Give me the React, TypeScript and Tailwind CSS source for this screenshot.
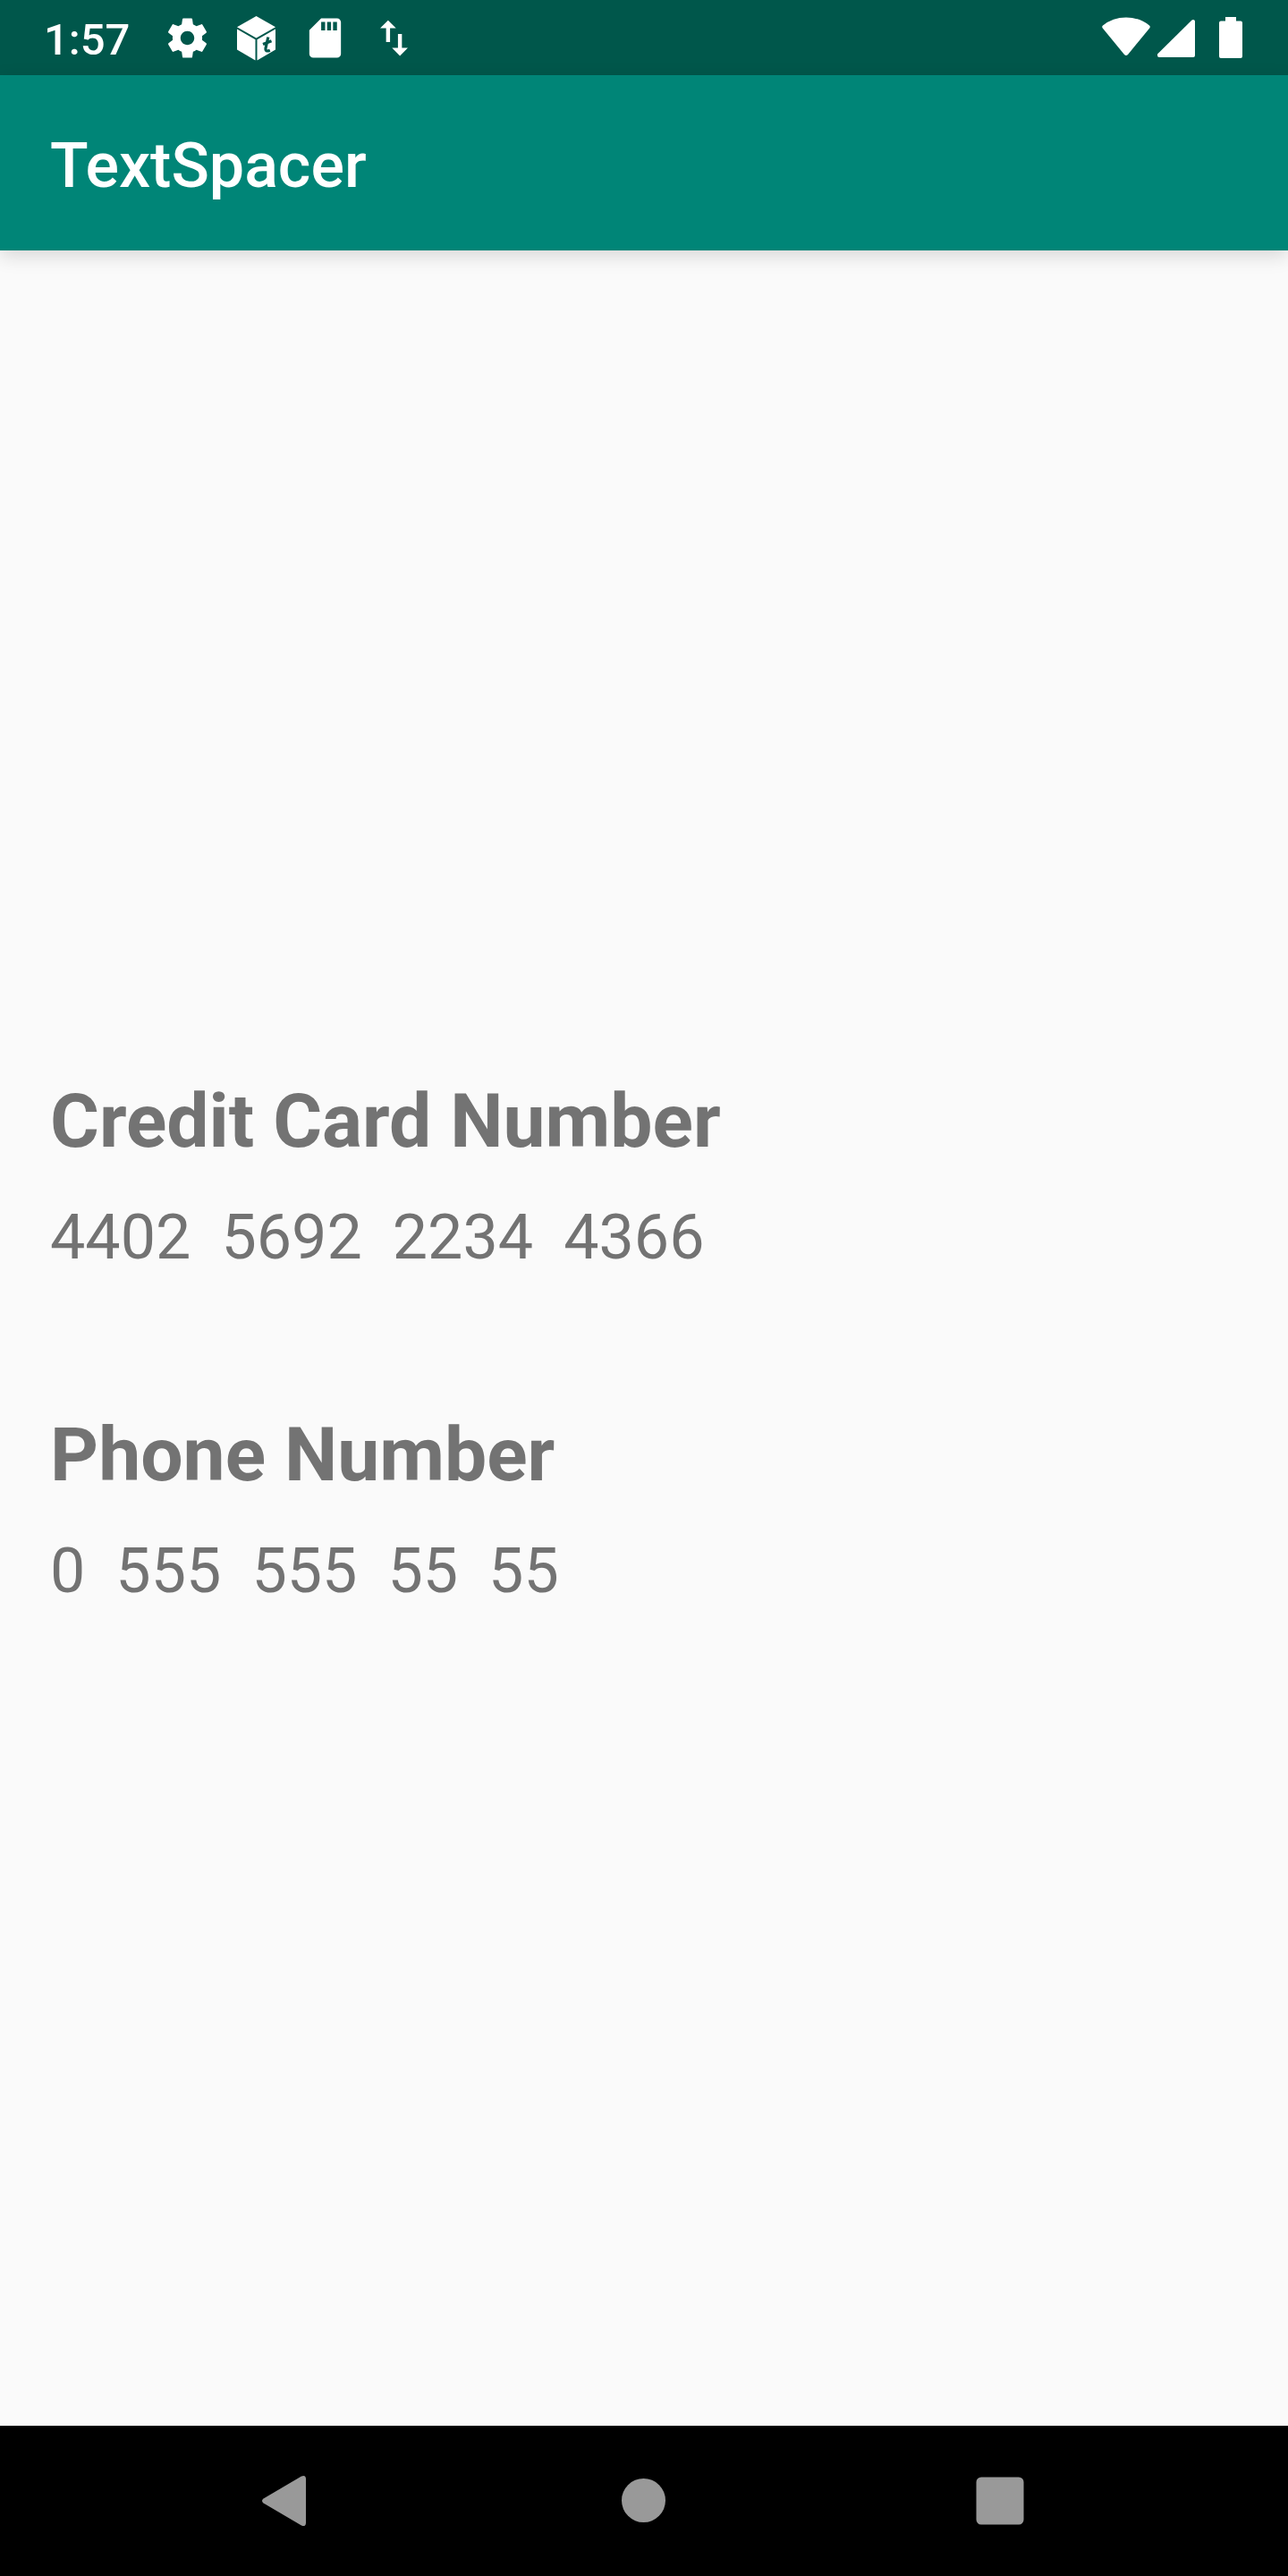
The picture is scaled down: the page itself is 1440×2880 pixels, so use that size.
import React from "react";

function StatusBar() {
  return (
    <div className="flex h-[84px] shrink-0 items-center justify-between bg-[#00574b] pr-[51px] pl-[49px] text-white">
      <div className="flex items-center">
        <time className="pt-1.5 text-[49px] leading-[56px] font-medium">1:57</time>
        <div className="ml-[38px] flex items-center gap-[24px]">
          <svg className="size-[53px]" viewBox="0 0 24 24" fill="currentColor" aria-label="Settings">
            <path d="M19.43 12.98c.04-.32.07-.64.07-.98s-.03-.66-.07-.98l2.11-1.65c.19-.15.24-.42.12-.64l-2-3.46c-.12-.22-.39-.3-.61-.22l-2.49 1c-.52-.4-1.08-.73-1.69-.98l-.38-2.65C14.46 2.18 14.25 2 14 2h-4c-.25 0-.46.18-.49.42l-.38 2.65c-.61.25-1.17.59-1.69.98l-2.49-1c-.23-.09-.49 0-.61.22l-2 3.46c-.13.22-.07.49.12.64l2.11 1.65c-.04.32-.07.65-.07.98s.03.66.07.98l-2.11 1.65c-.19.15-.24.42-.12.64l2 3.46c.12.22.39.3.61.22l2.49-1c.52.4 1.08.73 1.69.98l.38 2.65c.03.24.24.42.49.42h4c.25 0 .46-.18.49-.42l.38-2.65c.61-.25 1.17-.59 1.69-.98l2.49 1c.23.09.49 0 .61-.22l2-3.46c.12-.22.07-.49-.12-.64l-2.11-1.65zM12 15.5c-1.93 0-3.5-1.57-3.5-3.5s1.57-3.5 3.5-3.5 3.5 1.57 3.5 3.5-1.57 3.5-3.5 3.5z" />
          </svg>
          <svg className="size-[53px]" viewBox="0 0 53 53" fill="currentColor" aria-label="Package">
            <path d="M26.5 2 48 14.2 26.5 26.5 5 14.2Z" />
            <path d="M5 16.5 25.5 28.3V51.5L5 39.5Z" />
            <path d="M48 16.5 27.5 28.3V51.5L48 39.5Z" />
            <path
              d="M39.8 25.5 37 38Q36.5 42.5 41.8 40.2M34 33.5 43.5 29.8"
              fill="none"
              stroke="#00574b"
              strokeWidth="3.2"
            />
          </svg>
          <svg className="size-[53px]" viewBox="0 0 24 24" fill="currentColor" aria-label="SD card">
            <path d="M18 2h-8L4 8v12c0 1.1.9 2 2 2h12c1.1 0 2-.9 2-2V4c0-1.1-.9-2-2-2zm-6 6.2h-2v-4.4h2zm3 0h-2v-4.4h2zm3 0h-2v-4.4h2z" />
          </svg>
          <svg className="size-[53px]" viewBox="0 0 24 24" fill="currentColor" aria-label="Data transfer">
            <path d="M16 17.01V10h-2v7.01h-3L15 21l4-3.99h-3zM9 3 5 6.99h3V14h2V6.99h3L9 3z" />
          </svg>
        </div>
      </div>
      <div className="flex items-center">
        <svg className="h-[48px] w-[54px]" viewBox="0 0 54 48" fill="currentColor" aria-label="Wi-Fi">
          <path d="M1 10.5Q12 1.5 27 1.5T53 10.5Q54.5 12 53.2 13.5L29 43Q27 45 25 43L.8 13.5Q-.5 12 1 10.5Z" />
        </svg>
        <svg className="ml-[8px] h-[48px] w-[42px]" viewBox="0 0 42 48" fill="currentColor" aria-label="Mobile signal">
          <path d="M38.5 4.5Q39.5 3.8 41 4.2Q42 4.8 42 6V44Q42 46 40 46H2Q0 46 0 44V42.5Z" />
        </svg>
        <svg className="ml-[27px] h-[48px] w-[26px]" viewBox="0 0 26 48" fill="currentColor" aria-label="Battery">
          <path d="M7 1H19V5.5H24Q26 5.5 26 7.5V45Q26 47 24 47H2Q0 47 0 45V7.5Q0 5.5 2 5.5H7Z" />
        </svg>
      </div>
    </div>
  );
}

function Field({ label, groups }: { label: string; groups: string[] }) {
  return (
    <section className="flex flex-col gap-[27px]">
      <h2 className="text-[84px] leading-[120px] font-bold">{label}</h2>
      <p className="flex flex-wrap gap-x-[34px] text-[70px] leading-[84px]">
        {groups.map((group, index) => (
          <span key={index}>{group}</span>
        ))}
      </p>
    </section>
  );
}

function NavigationBar() {
  return (
    <nav className="flex h-[168px] shrink-0 bg-black px-[121px] text-[#999999]">
      <button type="button" aria-label="Back" className="flex flex-1 items-center justify-center">
        <svg className="size-[98px]" viewBox="0 0 98 98" fill="currentColor">
          <path d="M65 21.5Q69.5 19.5 70 24V74Q69.5 78.5 65 76.5L22.5 51.5Q19.5 49 22.5 46.5Z" />
        </svg>
      </button>
      <button type="button" aria-label="Home" className="flex flex-1 items-center justify-center">
        <svg className="size-[98px]" viewBox="0 0 98 98" fill="currentColor">
          <circle cx="48.5" cy="48.5" r="24.5" />
        </svg>
      </button>
      <button type="button" aria-label="Recent apps" className="flex flex-1 items-center justify-center">
        <svg className="size-[98px]" viewBox="0 0 98 98" fill="currentColor">
          <rect x="21.5" y="22.5" width="53" height="53" rx="5.5" />
        </svg>
      </button>
    </nav>
  );
}

export default function App() {
  return (
    <div className="flex min-h-screen flex-col bg-[#fafafa] font-[Roboto,sans-serif]">
      <StatusBar />
      <header className="flex h-[196px] shrink-0 items-center bg-[#008577] px-[56px] pt-1.5 text-white shadow-[0_6px_20px_rgba(0,0,0,0.14)]">
        <h1 className="text-[70px] leading-[84px] font-medium">TextSpacer</h1>
      </header>
      <main className="flex grow flex-col justify-center gap-[142px] px-[56px] text-[#737373]">
        <Field label="Credit Card Number" groups={["4402", "5692", "2234", "4366"]} />
        <Field label="Phone Number" groups={["0", "555", "555", "55", "55"]} />
      </main>
      <NavigationBar />
    </div>
  );
}
